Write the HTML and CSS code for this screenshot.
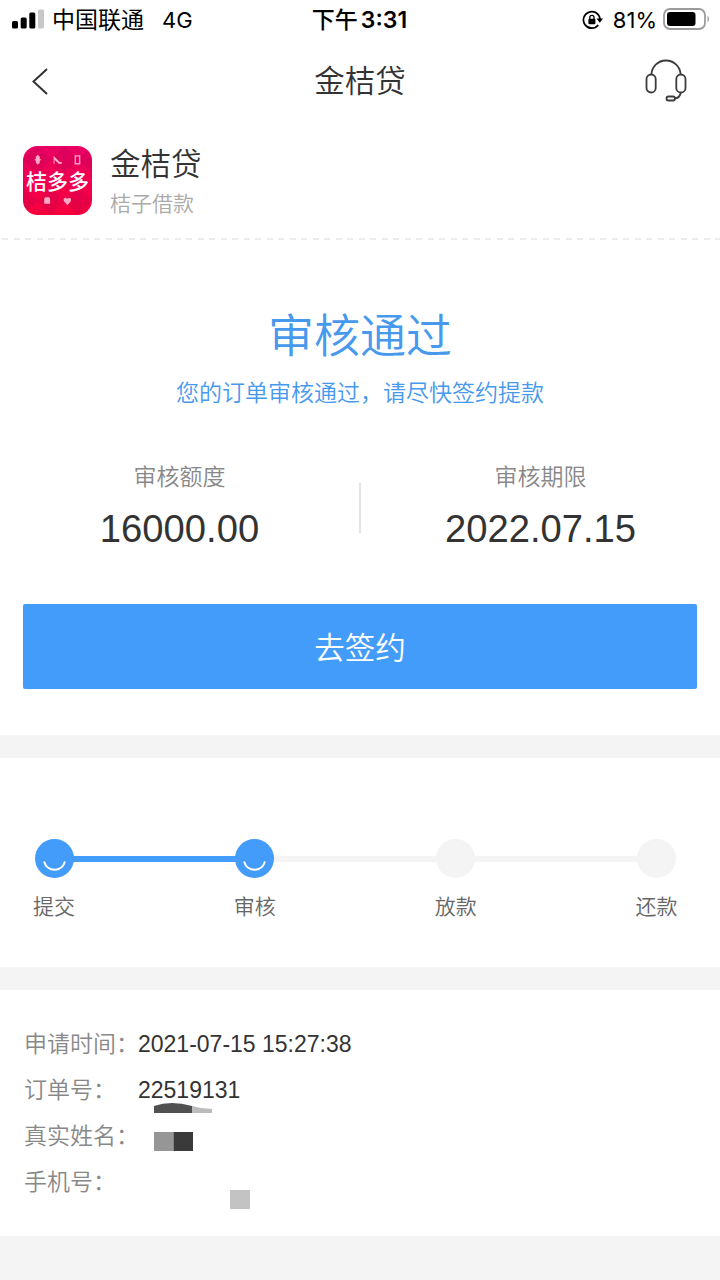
FILE: index.html
```html
<!DOCTYPE html>
<html lang="zh-CN">
<head>
<meta charset="utf-8">
<title>金桔贷</title>
<link rel="stylesheet" href="styles.css">
</head>
<body>
<header class="status">
  <div class="status-left">
    <svg class="signal" width="32" height="20" viewBox="0 0 32 20"><rect x="0" y="12" width="6" height="7.500" rx="1.500"/><rect x="8.700" y="8.500" width="6" height="11" rx="1.500"/><rect x="17.300" y="3.500" width="6" height="16" rx="1.500"/><rect x="26" y="0.500" width="6" height="19" rx="1.500" fill="#c8c8c8"/></svg>
    <span class="carrier">中国联通</span><span class="network">4G</span>
  </div>
  <div class="clock"><span class="ampm">下午</span><span>3:31</span></div>
  <div class="status-right">
    <svg class="lock" width="22" height="20" viewBox="0 0 22 20"><path d="M16.300 15A8.300 8.300 0 1 1 18 9" fill="none" stroke="#000" stroke-width="1.700"/><path d="M14.500 8.500h6.500l-3.200 4.300z"/><rect x="6.400" y="8.800" width="7" height="5.500" rx="1"/><path d="M7.800 9V7.500a2.100 2.100 0 0 1 4.200 0V9" fill="none" stroke="#000" stroke-width="1.300"/></svg>
    <span class="percent">81%</span>
    <svg class="battery" width="47" height="22" viewBox="0 0 47 22"><rect x="1" y="1" width="41" height="20" rx="6" fill="none" stroke="#9b9b9b" stroke-width="1.800"/><rect x="4" y="4" width="28.500" height="14" rx="3"/><path d="M44.500 7.500v7q1.500-1 1.500-3.500t-1.500-3.500z" fill="#9b9b9b"/></svg>
  </div>
</header>
<nav class="nav">
  <svg width="44" height="44" viewBox="0 0 44 44"><path d="M25 10L11.500 22.500L25 35" fill="none" stroke="#333" stroke-width="2"/></svg>
  <h1 class="nav-title">金桔贷</h1>
  <svg width="44" height="44" viewBox="0 0 44 44" fill="none" stroke="#3c3c3c" stroke-width="1.800"><path d="M7.500 15.500a14.500 14 0 0 1 29 0"/><rect x="2.500" y="15.500" width="9.200" height="18" rx="4.600"/><rect x="32.300" y="15.500" width="9.200" height="18" rx="4.600"/><path d="M36.800 33.500q-.8 5.500-6.300 6"/><rect x="22.500" y="37.500" width="8.500" height="4" rx="2"/></svg>
</nav>
<section class="product">
  <div class="logo">
    <svg width="69" height="69" viewBox="0 0 70 70">
      <defs><linearGradient id="pink" x2="0" y2="1"><stop stop-color="#e90065"/><stop offset="1" stop-color="#f8003c"/></linearGradient><clipPath id="round"><rect width="70" height="70" rx="15"/></clipPath></defs>
      <g clip-path="url(#round)"><rect width="70" height="70" fill="url(#pink)"/>
      <path d="M0 14L14 0l14 14-14 14zM28 14L42 0l14 14-14 14zM14 56l14-14 14 14-14 14zM42 56l14-14 14 14-14 14zM-14 56L0 42l14 14L0 70zM56 14L70 0v28z" fill="#b90050" opacity=".25"/>
      <g fill="#ffa8c5"><path d="M15 9l2 2v2l1.500 1-1.500 1v2l-2 2-2-2v-2l-1.500-1 1.500-1v-2z"/><path d="M31 10l6 6 2.500.5V18h-3.500l-4-4v4h-1z"/><path d="M53 10h4.500v8H53z" fill="none" stroke="#ffa8c5" stroke-width="1.300"/><path d="M21.500 53.500l1-1.500h4l1 1.500v5h-6z"/><path d="M45 60l-3.500-4q-1-3.500 1.800-3.500l1.700 1 1.700-1q2.800 0 1.800 3.500z"/></g></g>
    </svg>
    <span class="logo-text">桔多多</span>
  </div>
  <div class="product-copy"><h2 class="product-name">金桔贷</h2><p class="product-sub">桔子借款</p></div>
</section>
<main>
  <section class="result">
    <h2 class="result-title">审核通过</h2>
    <p class="result-note">您的订单审核通过，请尽快签约提款</p>
    <div class="facts">
      <div class="fact"><span class="fact-label">审核额度</span><span class="fact-value">16000.00</span></div>
      <div class="divider"></div>
      <div class="fact"><span class="fact-label">审核期限</span><span class="fact-value">2022.07.15</span></div>
    </div>
    <button class="sign">去签约</button>
  </section>
  <section class="progress">
    <div class="step done"><div class="dot"><svg width="39" height="39" viewBox="0 0 39 39"><path d="M9 22.500C12.500 33.500 26.500 33.500 30 22.500"/></svg></div><span>提交</span></div>
    <div class="bar done-bar"></div>
    <div class="step done"><div class="dot"><svg width="39" height="39" viewBox="0 0 39 39"><path d="M9 22.500C12.500 33.500 26.500 33.500 30 22.500"/></svg></div><span>审核</span></div>
    <div class="bar"></div>
    <div class="step"><div class="dot"></div><span>放款</span></div>
    <div class="bar"></div>
    <div class="step"><div class="dot"></div><span>还款</span></div>
  </section>
  <dl class="details">
    <dt>申请时间：</dt><dd>2021-07-15 15:27:38</dd>
    <dt>订单号：</dt><dd>22519131<svg class="redact order-mask" width="58" height="10" viewBox="0 0 58 10"><path d="M0 10V3Q17-3 38 3v7z" fill="#505050"/><path d="M38 3q10 3 20 3v4H38z" fill="#bbb"/></svg></dd>
    <dt>真实姓名：</dt><dd><svg class="redact name-mask" width="39" height="19"><rect width="19.500" height="19" fill="#969696"/><rect x="19.500" width="19.500" height="19" fill="#3a3a3a"/></svg></dd>
    <dt>手机号：</dt><dd><svg class="redact phone-mask" width="20" height="19"><rect width="20" height="19" fill="#c3c3c3"/></svg></dd>
  </dl>
</main>
</body>
</html>
```
FILE: styles.css
```css
* { box-sizing: border-box; margin: 0; padding: 0; }
body { width: 720px; height: 1280px; overflow: hidden; background: #f4f4f4; color: #333; font-family: "Liberation Sans", "Noto Sans CJK SC", sans-serif; font-weight: 350; }
svg { display: block; flex: none; }
h1, h2 { font-weight: 350; }
.status { display: grid; grid-template-columns: 1fr auto 1fr; align-items: center; height: 40px; padding: 0 11px 0 12px; background: #fff; color: #000; }
.status-left, .status-right, .clock { display: flex; align-items: center; line-height: 40px; }
.signal { margin-top: -2px; }
.carrier { margin-left: 8px; font-size: 23px; font-weight: 400; }
.network { margin-left: 18px; font: 400 22px/40px Inter, sans-serif; }
.clock { margin-right: 1px; font: 600 23px/40px Inter, "Noto Sans CJK SC", sans-serif; }
.ampm { margin-left: -1px; margin-right: 3px; font-weight: 500; }
.status-right { justify-content: flex-end; }
.percent { margin: 0 6px 0 9px; font: 400 22px/40px Inter, sans-serif; }
.battery { margin-top: -2px; margin-right: -1px; }
.nav { display: grid; grid-template-columns: 44px 1fr 44px; align-items: center; height: 82px; padding: 0 32px 0 22px; background: #fff; }
.nav-title { padding-left: 10px; text-align: center; font-size: 30.500px; line-height: 44px; }
.product { display: flex; gap: 18px; height: 118px; padding: 24px 23px 0; background: repeating-linear-gradient(90deg, #fff 0 2px, #ebebeb 2px 8px, #fff 8px 11.500px) left bottom / 100% 2px no-repeat, #fff; }
.logo { position: relative; width: 69px; height: 69px; }
.logo-text { position: absolute; left: 3px; top: 17px; color: #fff; font: 500 21px/34px "Noto Sans CJK SC", sans-serif; white-space: nowrap; }
.product-name { font-size: 30.500px; line-height: 36px; }
.product-sub { margin-top: 7px; color: #aaa; font-size: 21px; line-height: 30px; }
.result { height: 495px; padding: 61px 23px 0; background: #fff; text-align: center; }
.result-title { color: #4799ee; font-size: 46px; line-height: 70px; }
.result-note { margin-top: 5px; color: #4799ee; font-size: 23px; line-height: 34px; }
.facts { display: flex; align-items: center; margin: 51px -23px 0; height: 90px; }
.fact { flex: 1; display: flex; flex-direction: column; }
.fact-label { color: #888; font-size: 23px; line-height: 34px; }
.fact-value { margin-top: 11px; font-size: 38.200px; line-height: 48px; }
.divider { width: 2px; height: 50px; margin-top: 4px; background: #e2e2e2; }
.sign { display: block; width: 674px; height: 85px; margin-top: 53px; border: 0; border-radius: 2px; background: #449cfa; color: #fff; font: 350 30.500px/85px "Noto Sans CJK SC", sans-serif; }
.progress { display: flex; align-items: flex-start; height: 209px; margin-top: 23px; padding: 80.500px 44px 0 34.500px; background: #fff; }
.step { display: flex; flex-direction: column; align-items: center; gap: 14px; width: 39px; color: #666; font-size: 21px; line-height: 30px; white-space: nowrap; }
.dot { position: relative; width: 39px; height: 39px; border-radius: 50%; background: #f4f4f4; }
.done .dot { background: #449cfa; }
.dot path { fill: none; stroke: #fff; stroke-width: 2; }
.bar { flex: 1; height: 6px; margin: 17px -1px 0; background: #f4f4f4; }
.done-bar { background: #449cfa; }
.details { display: grid; grid-template-columns: 114px 1fr; grid-auto-rows: 46px; height: 246px; margin-top: 23px; padding: 31px 24px 0; background: #fff; font-size: 23px; line-height: 46px; }
.details dt { color: #888; white-space: nowrap; }
.details dd { position: relative; }
.redact { position: absolute; }
.order-mask { left: 15.500px; top: 36px; }
.name-mask { left: 15.500px; top: 19px; }
.phone-mask { left: 92px; top: 31px; }
```
